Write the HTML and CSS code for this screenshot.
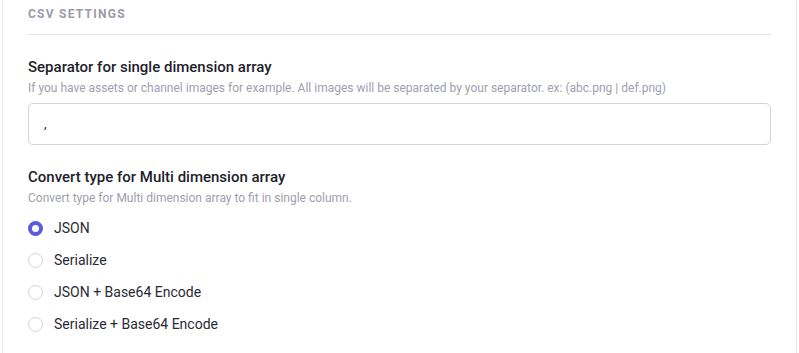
FILE: index.html
```html
<!DOCTYPE html>
<html>
<head>
<meta charset="utf-8">
<link rel="stylesheet" href="styles.css">
</head>
<body>
<div class="card">
  <div class="section-head">CSV Settings</div>
  <div class="field">
    <div class="field-title">Separator for single dimension array</div>
    <div class="field-desc">If you have assets or channel images for example. All images will be separated by your separator. ex: (abc.png | def.png)</div>
    <div class="input">,</div>
  </div>
  <div class="field">
    <div class="field-title">Convert type for Multi dimension array</div>
    <div class="field-desc">Convert type for Multi dimension array to fit in single column.</div>
    <div class="radios">
      <div class="radio checked"><span class="dot"></span>JSON</div>
      <div class="radio"><span class="dot"></span>Serialize</div>
      <div class="radio"><span class="dot"></span>JSON + Base64 Encode</div>
      <div class="radio"><span class="dot"></span>Serialize + Base64 Encode</div>
    </div>
  </div>
</div>
</body>
</html>
```

FILE: styles.css
```css
* { box-sizing: border-box; }
html, body { margin: 0; padding: 0; background: #fff; }
body { font-family: Roboto, "Noto Sans", sans-serif; color: #1f1f2e; }
.card {
  margin-left: 2px;
  width: 795px;
  height: 353px;
  border-left: 1px solid #e6e6ee;
  border-right: 1px solid #e6e6ee;
  padding: 0 25px;
}
.section-head {
  text-transform: uppercase;
  font-size: 12px;
  font-weight: 700;
  letter-spacing: 1.25px;
  color: #9b9ba8;
  padding-top: 6px;
  line-height: 16px;
  height: 35px;
  border-bottom: 1px solid #e4e4ea;
}
.field-title {
  font-size: 15px;
  font-weight: 500;
  color: #1e1e2c;
  margin-top: 22px;
  line-height: 20px;
}
.field-desc {
  font-size: 12px;
  color: #a0a0ae;
  line-height: 17px;
  margin-top: 3px;
}
.input {
  margin-top: 6px;
  height: 42px;
  border: 1px solid #d4d4da;
  border-radius: 5px;
  padding: 10px 15px;
  font-size: 13px;
  line-height: 20px;
}
.radios { margin-top: 5px; display: flex; flex-direction: column; }
.radio {
  height: 32px;
  display: flex;
  align-items: center;
  gap: 11px;
  font-size: 14px;
  color: #2a2a36;
}
.dot {
  width: 15px; height: 15px;
  border-radius: 50%;
  border: 1px solid #d4d4da;
  background: #fff;
}
.radio.checked .dot {
  border: 4.5px solid #5b5bdc;
  background: #fff;
}
```
